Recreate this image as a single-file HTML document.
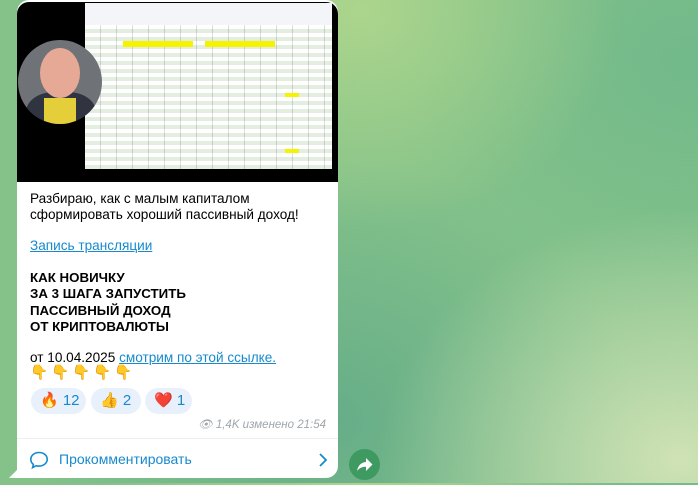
<!DOCTYPE html>
<html><head><meta charset="utf-8"><style>
*{margin:0;padding:0;box-sizing:border-box}
body{width:698px;height:483px;overflow:hidden;position:relative;font-family:"Liberation Sans",Arial,sans-serif;
background:
radial-gradient(ellipse 300px 250px at 680px 460px,#cfe2b6 0%,rgba(200,224,176,0) 100%),
radial-gradient(ellipse 260px 220px at 360px 10px,#acd58c 0%,rgba(172,213,140,0) 100%),
radial-gradient(ellipse 300px 260px at 330px 420px,#66ad88 0%,rgba(102,173,136,0) 100%),
radial-gradient(ellipse 300px 260px at 690px 60px,#72b98a 0%,rgba(114,185,138,0) 100%),
#84c28a;}
.bubble{position:absolute;left:17px;top:0;width:321px;height:478px;background:#fff;border-radius:12px 12px 12px 0}
.tail{position:absolute;left:9px;top:466px;width:12px;height:12px;background:#fff;clip-path:polygon(100% 0,100% 100%,0 100%)}
.video{position:absolute;left:17px;top:2px;width:321px;height:180px;background:#000;border-radius:12px 12px 0 0;overflow:hidden}
.sheet{position:absolute;left:68px;top:1px;width:247px;height:166px;background:#fff;
background-image:repeating-linear-gradient(0deg,#e4eee0 0 4px,#fff 4px 8px),repeating-linear-gradient(90deg,transparent 0 15px,#ddd 15px 16px);background-blend-mode:multiply}
.sheet .top{position:absolute;left:0;top:0;width:100%;height:22px;background:#f3f5f8}
.sheet .y{position:absolute;background:#f4f400}
.face{position:absolute;left:1px;top:38px;width:84px;height:84px;border-radius:50%;overflow:hidden;background:#6f7378}
.face div{position:absolute}
.t{position:absolute;left:30px;font-size:13.6px;color:#000;line-height:16.3px;white-space:nowrap}
.b{font-weight:bold;font-size:13.3px}
a{color:#168acd;text-decoration:underline}
.r{position:absolute;top:388px;height:26px;border-radius:13px;background:#e8f1fb;color:#168acd;font-size:15px;line-height:26px;padding-left:9px}
.meta{position:absolute;right:372px;top:417px;font-size:11.5px;color:#a0a6ab;font-style:italic}
.sep{position:absolute;left:17px;top:438px;width:321px;height:1px;background:#eceff1}
.cm{position:absolute;left:59px;top:451px;font-size:14px;color:#168acd}
.share{position:absolute;left:349px;top:449px;width:31px;height:31px;border-radius:50%;background:#3f9a62}
</style></head><body>
<div class="bubble"></div><div class="tail"></div>
<div class="video"><div class="sheet"><div class="top"></div>
<div class="y" style="left:38px;top:38px;width:70px;height:6px"></div>
<div class="y" style="left:120px;top:38px;width:70px;height:6px"></div>
<div class="y" style="left:200px;top:90px;width:14px;height:4px"></div>
<div class="y" style="left:200px;top:146px;width:14px;height:4px"></div>
</div><div class="face">
<div style="left:8px;top:52px;width:70px;height:50px;border-radius:40% 40% 0 0;background:#2f3440"></div>
<div style="left:26px;top:58px;width:32px;height:40px;background:#e4cf3a"></div>
<div style="left:22px;top:8px;width:40px;height:50px;border-radius:50%;background:#e5a996"></div>
</div></div>
<div class="t" style="top:191px">Разбираю, как с малым капиталом<br>сформировать хороший пассивный доход!</div>
<div class="t" style="top:238px"><a>Запись трансляции </a></div>
<div class="t b" style="top:270px">КАК НОВИЧКУ<br>ЗА 3 ШАГА ЗАПУСТИТЬ<br>ПАССИВНЫЙ ДОХОД<br>ОТ КРИПТОВАЛЮТЫ</div>
<div class="t" style="top:350px">от 10.04.2025 <a>смотрим по этой ссылке.</a></div>
<div class="t" style="top:365px;font-size:14.5px;letter-spacing:3px">👇👇👇👇👇</div>
<div class="r" style="left:31px;width:55px">🔥 12</div>
<div class="r" style="left:91px;width:50px">👍 2</div>
<div class="r" style="left:145px;width:47px">❤️ 1</div>
<div class="meta">👁 1,4K изменено 21:54</div>
<div class="sep"></div>
<svg style="position:absolute;left:29px;top:450px" width="20" height="20" viewBox="0 0 20 20"><path d="M10 2.5C5.3 2.5 1.8 5.6 1.8 9.4c0 2 1 3.8 2.6 5l-.8 3.2 3.6-1.9c.9.3 1.8.4 2.8.4 4.7 0 8.2-3.1 8.2-6.9S14.7 2.5 10 2.5z" fill="none" stroke="#168acd" stroke-width="1.6"/></svg>
<div class="cm">Прокомментировать</div>
<svg style="position:absolute;left:318px;top:452px" width="10" height="16" viewBox="0 0 10 16"><path d="M2 2l6 6-6 6" fill="none" stroke="#168acd" stroke-width="1.8"/></svg>
<div class="share"><svg width="31" height="31" viewBox="0 0 31 31"><path d="M17 9v4c-5 .5-8 3.5-9 9 2.2-3 5-4.3 9-4.3V22l6.5-6.5z" fill="#fff"/></svg></div>
</body></html>
